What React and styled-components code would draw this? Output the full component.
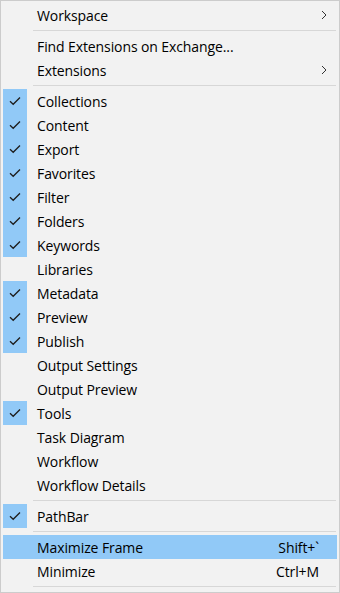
import React from 'react'
import styled, { createGlobalStyle } from 'styled-components'

const Global = createGlobalStyle`
  html, body { margin: 0; padding: 0; background: #f2f2f2; }
  body { font-family: "Open Sans", "Noto Sans", sans-serif; }
`

const Menu = styled.div`
  width: 340px;
  height: 593px;
  box-sizing: border-box;
  background: #f2f2f2;
  border: 1px solid #cccccc;
  padding: 2px;
  display: flex;
  flex-direction: column;
`

const Row = styled.div`
  height: 24px;
  display: flex;
  align-items: center;
  background: ${p => (p.$active ? '#91c9f7' : 'transparent')};
  color: #000;
  font-size: 14px;
  letter-spacing: -0.1px;
`

const CheckCell = styled.div`
  width: 24px;
  height: 24px;
  margin-right: 8px;
  display: flex;
  align-items: center;
  justify-content: center;
  background: ${p => (p.$checked ? '#91c9f7' : 'transparent')};
`

const Label = styled.span`
  flex: 1;
  padding-left: 2px;
`

const Shortcut = styled.span`
  padding-right: 18px;
`

const Arrow = styled.span`
  width: 10px;
  margin-right: 6px;
  display: flex;
  align-items: center;
`

const Sep = styled.div`
  height: 7px;
  display: flex;
  align-items: center;
  padding-left: 30px;
  padding-right: 1px;
  &::after {
    content: '';
    flex: 1;
    height: 1px;
    background: #d7d7d7;
  }
`

const Check = () => (
  <svg width="12" height="10" viewBox="0 0 12 10">
    <path d="M1 5.2 L4.2 8.3 L11 1.5" fill="none" stroke="#1e1e1e" strokeWidth="1.3" />
  </svg>
)

const Chevron = () => (
  <svg width="6" height="10" viewBox="0 0 6 10">
    <path d="M1 1 L5 5 L1 9" fill="none" stroke="#333" strokeWidth="1" />
  </svg>
)

const items = [
  { label: 'Workspace', sub: true },
  'sep',
  { label: 'Find Extensions on Exchange...' },
  { label: 'Extensions', sub: true },
  'sep',
  { label: 'Collections', checked: true },
  { label: 'Content', checked: true },
  { label: 'Export', checked: true },
  { label: 'Favorites', checked: true },
  { label: 'Filter', checked: true },
  { label: 'Folders', checked: true },
  { label: 'Keywords', checked: true },
  { label: 'Libraries' },
  { label: 'Metadata', checked: true },
  { label: 'Preview', checked: true },
  { label: 'Publish', checked: true },
  { label: 'Output Settings' },
  { label: 'Output Preview' },
  { label: 'Tools', checked: true },
  { label: 'Task Diagram' },
  { label: 'Workflow' },
  { label: 'Workflow Details' },
  'sep',
  { label: 'PathBar', checked: true },
  'sep',
  { label: 'Maximize Frame', shortcut: 'Shift+`', active: true },
  { label: 'Minimize', shortcut: 'Ctrl+M' },
  'sep',
]

export default function App() {
  return (
    <>
      <Global />
      <Menu>
        {items.map((it, i) =>
          it === 'sep' ? (
            <Sep key={i} />
          ) : (
            <Row key={i} $active={it.active}>
              <CheckCell $checked={it.checked}>
                {it.checked && <Check />}
              </CheckCell>
              <Label>{it.label}</Label>
              {it.shortcut && <Shortcut>{it.shortcut}</Shortcut>}
              {it.sub && (
                <Arrow>
                  <Chevron />
                </Arrow>
              )}
            </Row>
          )
        )}
      </Menu>
    </>
  )
}
